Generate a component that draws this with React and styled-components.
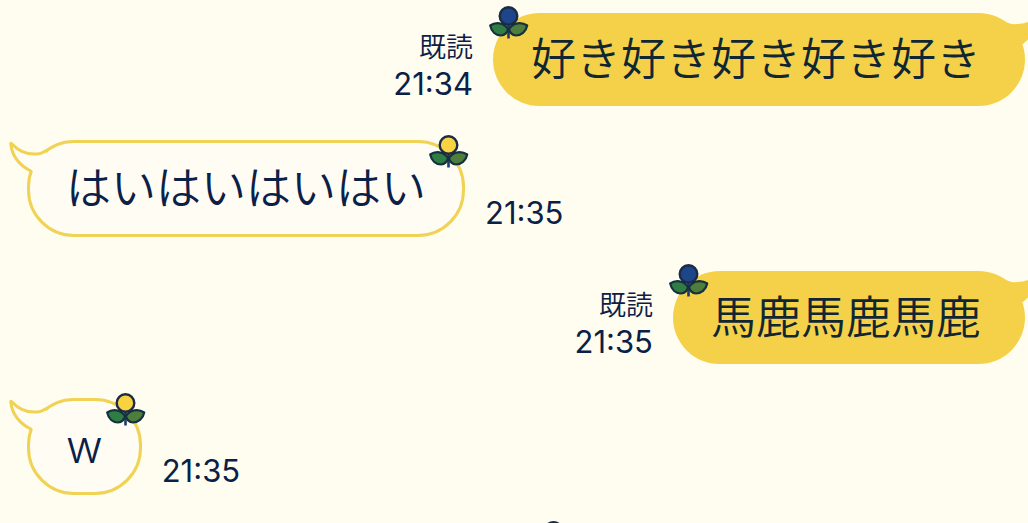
import React from 'react';
import styled, { createGlobalStyle } from 'styled-components';

const messages = [
    { id: 1, from: 'me', text: '好き好き好き好き好き', time: '21:34', read: true },
    { id: 2, from: 'friend', text: 'はいはいはいはい', time: '21:35' },
    { id: 3, from: 'me', text: '馬鹿馬鹿馬鹿', time: '21:35', read: true },
    { id: 4, from: 'friend', text: 'w', time: '21:35' },
];

function Flower({ color }) {
    return (
        <FlowerIcon viewBox="0 0 40 34" aria-hidden="true">
            <path d="M19.5 19V32.5" stroke="#1d3b66" strokeWidth="2.6" />
            <path d="M19 23C15 16 6 16 1.2 19.5C2.5 26 7 29.5 12 29.5C16 29.5 18.5 26 19 23Z" fill="#2f7d43" stroke="#15303f" strokeWidth="2.2" strokeLinejoin="round" />
            <path d="M20 23C24 16 33 16 38.2 19.5C37 26 32 29.5 27 29.5C23 29.5 20.5 26 20 23Z" fill="#4f7d3c" stroke="#15303f" strokeWidth="2.2" strokeLinejoin="round" />
            <circle cx="19.5" cy="10" r="8.8" fill={color} stroke="#1c2b45" strokeWidth="2.4" />
        </FlowerIcon>
    )
}

function Message(props) {
    const { from, text, time, read } = props.message;
    const mine = from === 'me';

    return (
        <Row $mine={mine}>
            <Bubble $mine={mine}>
                {mine ? (
                    <SentTail viewBox="0 0 44 40" aria-hidden="true">
                        <path d="M0 10Q8 15 15 14Q28 14 38 4Q41 2 40 6C38 18 29 27 21 34L10 38Z" fill="#f5d149" />
                    </SentTail>
                ) : (
                    <ReceivedTail viewBox="0 0 60 48" aria-hidden="true">
                        <path d="M45 21Q41 24 37 24Q22 25 12 14Q10 12 11 15C12 26 20 36 31 41L37 44L48 26Z" fill="#fffcf4" />
                        <path d="M46 20.5Q41 24 37 24Q22 25 12 14Q10 12 11 15C12 26 20 36 31 41L30.5 43" fill="none" stroke="#f0d355" strokeWidth="3" strokeLinejoin="round" />
                    </ReceivedTail>
                )}
                <Text>{text}</Text>
                <Flower color={mine ? '#1d468a' : '#f9d33f'} />
            </Bubble>
            <Meta $mine={mine}>
                {read && <span>既読</span>}
                <time>{time}</time>
            </Meta>
        </Row>
    )
}

function App() {
    return (
        <Chat>
            <GlobalStyle />
            {messages.map(message => <Message key={message.id} message={message} />)}
            <NextRow>
                <Flower color="#1d468a" />
            </NextRow>
        </Chat>
    )
}

export default App;

const GlobalStyle = createGlobalStyle`
    * {
        box-sizing: border-box;
    }

    body {
        margin: 0;
        background: #fffdf0;
        color: #0b2047;
        font-family: Inter, "Noto Sans CJK JP", sans-serif;
    }
`

const Chat = styled.main`
    display: flex;
    flex-direction: column;
    gap: 34px;
    height: 100vh;
    padding-top: 13px;
    overflow: hidden;
`

const Row = styled.div`
    display: flex;
    flex-shrink: 0;
    flex-direction: ${props => props.$mine ? 'row-reverse' : 'row'};
    align-items: flex-end;
    gap: 20px;
    padding: ${props => props.$mine ? '0 3px 0 0' : '0 0 0 27px'};
`

const FlowerIcon = styled.svg`
    position: absolute;
    width: 40px;
    height: 34px;
`

const Bubble = styled.div`
    position: relative;
    padding: ${props => props.$mine ? '14px 44px 14px 38px' : '13px 36px'};
    border: ${props => props.$mine ? 'none' : '3px solid #f0d355'};
    border-radius: 47px;
    background: ${props => props.$mine ? '#f5d149' : '#fffcf4'};
    color: ${props => props.$mine ? '#102733' : '#0b2047'};

    ${FlowerIcon} {
        top: ${props => props.$mine ? '-7px' : '-8px'};
        left: ${props => props.$mine ? '-4px' : 'auto'};
        right: ${props => props.$mine ? 'auto' : '-7px'};
    }
`

const Text = styled.p`
    margin: 0;
    font-size: 45px;
    font-weight: 350;
    line-height: 65px;
`

const SentTail = styled.svg`
    position: absolute;
    top: -3px;
    right: -21px;
    width: 44px;
    height: 40px;
`

const ReceivedTail = styled.svg`
    position: absolute;
    top: -13px;
    left: -30px;
    width: 60px;
    height: 48px;
`

const Meta = styled.div`
    display: flex;
    flex-direction: column;
    align-items: flex-end;
    padding-bottom: ${props => props.$mine ? '4px' : '6px'};
    font-size: 31px;
    line-height: 36px;

    span {
        font-size: 27px;
        font-weight: 350;
    }
`

const NextRow = styled.div`
    position: relative;
    align-self: flex-end;
    flex-shrink: 0;
    width: 490px;
    height: 93px;

    ${FlowerIcon} {
        top: -8px;
        left: -4px;
    }
`
